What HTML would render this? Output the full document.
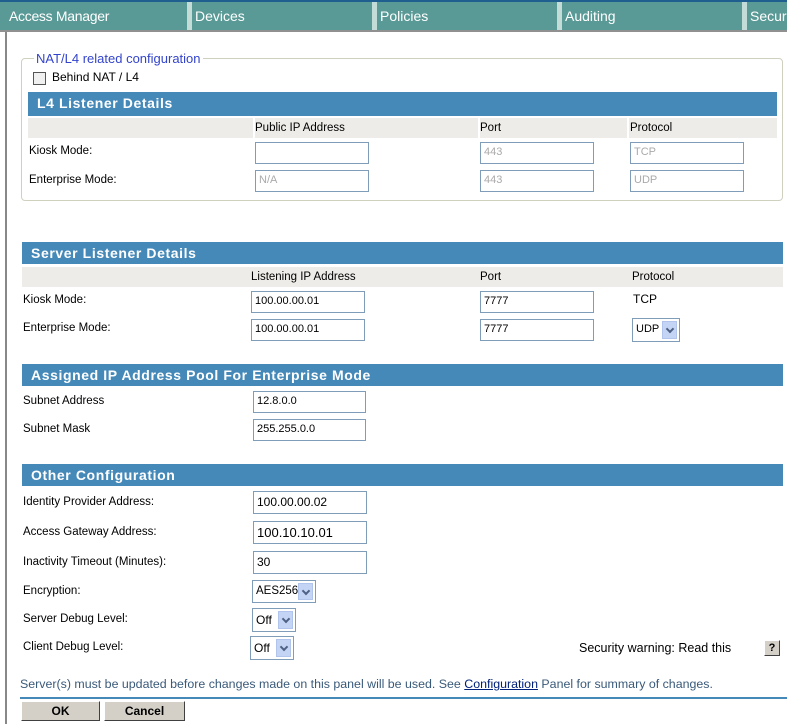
<!DOCTYPE html>
<html><head><meta charset="utf-8"><style>
*{margin:0;padding:0;box-sizing:border-box}
body{width:787px;height:724px;overflow:hidden;background:#fff;font-family:"Liberation Sans",sans-serif;font-size:12px;color:#000;position:relative}
.a{position:absolute;white-space:nowrap}
.l{font-size:11.5px}
.tab{position:absolute;top:2px;height:28px;background:#5a9a96;color:#fff;font-size:14px;padding:6px 0 0 9px}
.sep{position:absolute;top:2px;height:28px;width:5px;background:#c4dcd8}
.hd{position:absolute;background:#4589b9;color:#fff;font-weight:bold;font-size:14px;letter-spacing:0.6px;padding:3px 0 0 9px}
.gr{position:absolute;background:#eeece8;height:20px}
.in{position:absolute;border:1px solid #7f9db9;background:#fff;font-size:12px;padding:3px 0 0 3px;height:22px}
.dis{color:#aaa}
.sel{position:absolute;border:1px solid #7f9db9;background:#fff;height:24px;padding:4px 0 0 3px;font-size:12px;overflow:hidden}
.sel i{position:absolute;right:2px;top:2px;width:15px;bottom:2px;background:#c4d4f4;border:1px solid #b0c4ec}
.sel i:after{content:"";position:absolute;left:4px;top:4px;width:4px;height:4px;border-right:2px solid #4d6185;border-bottom:2px solid #4d6185;transform:rotate(45deg)}
.btn{position:absolute;background:#d4d0c8;border:1px solid #fff;border-right-color:#404040;border-bottom-color:#404040;font-weight:bold;text-align:center;height:20px;padding-top:2px}
</style></head><body>
<div class="a" style="left:0;top:0;width:787px;height:2px;background:#1f5f8f"></div>
<div class="tab" style="left:0;width:187px;letter-spacing:-0.3px">Access Manager</div>
<div class="sep" style="left:187px"></div>
<div class="tab" style="left:192px;width:180px;padding-left:3px">Devices</div>
<div class="sep" style="left:372px"></div>
<div class="tab" style="left:377px;width:180px;padding-left:3px">Policies</div>
<div class="sep" style="left:557px"></div>
<div class="tab" style="left:562px;width:180px;padding-left:3px">Auditing</div>
<div class="sep" style="left:742px"></div>
<div class="tab" style="left:747px;width:40px;overflow:hidden;padding-left:3px">Security</div>
<div class="a" style="left:0;top:30px;width:787px;height:2px;background:#909090"></div>
<div class="a" style="left:5px;top:32px;width:2px;height:692px;background:#888"></div>

<div class="a" style="left:21px;top:58px;width:762px;height:143px;border:1px solid #d0d0bf;border-radius:4px"></div>
<div class="a" style="left:34px;top:51px;background:#fff;padding:0 2px;color:#3344cc;font-size:13px">NAT/L4 related configuration</div>
<div class="a" style="left:33px;top:72px;width:13px;height:13px;border:1px solid #555;background:#f0f0f0"></div>
<div class="a" style="left:52px;top:70px">Behind NAT / L4</div>
<div class="hd" style="left:28px;top:92px;width:749px;height:24px">L4 Listener Details</div>
<div class="gr" style="left:28px;top:118px;width:749px"></div>
<div class="a" style="left:253px;top:118px;width:2px;height:20px;background:#fff"></div>
<div class="a" style="left:478px;top:118px;width:2px;height:20px;background:#fff"></div>
<div class="a" style="left:627px;top:118px;width:2px;height:20px;background:#fff"></div>
<div class="a l" style="left:255px;top:122px">Public IP Address</div>
<div class="a l" style="left:480px;top:122px">Port</div>
<div class="a l" style="left:630px;top:122px">Protocol</div>
<div class="a l" style="left:29px;top:145px">Kiosk Mode:</div>
<div class="a l" style="left:29px;top:174px">Enterprise Mode:</div>
<div class="in" style="left:255px;top:142px;width:114px"></div>
<div class="in dis" style="left:480px;top:142px;width:114px;font-size:11px">443</div>
<div class="in dis" style="left:630px;top:142px;width:114px;font-size:11px">TCP</div>
<div class="in dis" style="left:255px;top:170px;width:114px;font-size:11px">N/A</div>
<div class="in dis" style="left:480px;top:170px;width:114px;font-size:11px">443</div>
<div class="in dis" style="left:630px;top:170px;width:114px;font-size:11px">UDP</div>

<div class="hd" style="left:22px;top:242px;width:761px;height:22px">Server Listener Details</div>
<div class="gr" style="left:22px;top:267px;width:761px"></div>
<div class="a l" style="left:251px;top:271px">Listening IP Address</div>
<div class="a l" style="left:480px;top:271px">Port</div>
<div class="a l" style="left:632px;top:271px">Protocol</div>
<div class="a l" style="left:23px;top:294px">Kiosk Mode:</div>
<div class="a l" style="left:23px;top:322px">Enterprise Mode:</div>
<div class="in" style="left:251px;top:291px;width:114px;font-size:11px">100.00.00.01</div>
<div class="in" style="left:480px;top:291px;width:114px;font-size:11px">7777</div>
<div class="a" style="left:633px;top:292px">TCP</div>
<div class="in" style="left:251px;top:319px;width:114px;font-size:11px">100.00.00.01</div>
<div class="in" style="left:480px;top:319px;width:114px;font-size:11px">7777</div>
<div class="sel" style="left:632px;top:318px;width:48px;font-size:11px">UDP<i></i></div>

<div class="hd" style="left:22px;top:364px;width:761px;height:22px">Assigned IP Address Pool For Enterprise Mode</div>
<div class="a l" style="left:23px;top:395px">Subnet Address</div>
<div class="a l" style="left:23px;top:423px">Subnet Mask</div>
<div class="in" style="left:253px;top:391px;width:113px;font-size:11px">12.8.0.0</div>
<div class="in" style="left:253px;top:419px;width:113px;font-size:11px">255.255.0.0</div>

<div class="hd" style="left:22px;top:464px;width:761px;height:22px">Other Configuration</div>
<div class="a l" style="left:23px;top:496px">Identity Provider Address:</div>
<div class="a l" style="left:23px;top:526px">Access Gateway Address:</div>
<div class="a l" style="left:23px;top:556px">Inactivity Timeout (Minutes):</div>
<div class="a l" style="left:23px;top:585px">Encryption:</div>
<div class="a l" style="left:23px;top:613px">Server Debug Level:</div>
<div class="a l" style="left:23px;top:641px">Client Debug Level:</div>
<div class="in" style="left:253px;top:491px;width:114px;height:23px;font-size:12px">100.00.00.02</div>
<div class="in" style="left:253px;top:521px;width:114px;height:23px;font-size:13px;padding-top:3px">100.10.10.01</div>
<div class="in" style="left:253px;top:551px;width:114px;height:23px;font-size:12px">30</div>
<div class="sel" style="left:252px;top:580px;width:64px;height:23px;font-size:11.5px">AES256<i></i></div>
<div class="sel" style="left:252px;top:608px;width:44px">Off<i></i></div>
<div class="sel" style="left:250px;top:636px;width:44px">Off<i></i></div>
<div class="a" style="left:579px;top:641px;font-size:12.5px">Security warning: Read this</div>
<div class="a" style="left:764px;top:640px;width:16px;height:16px;background:#d4d0c8;border:1px solid #fff;border-right-color:#404040;border-bottom-color:#404040;font-weight:bold;text-align:center;font-size:11px;line-height:14px">?</div>

<div class="a" style="left:20px;top:677px;color:#3a5a7a;font-size:12.4px">Server(s) must be updated before changes made on this panel will be used. See <span style="color:#00207a;text-decoration:underline">Configuration</span> Panel for summary of changes.</div>
<div class="a" style="left:20px;top:697px;width:767px;height:2px;background:#4589b9"></div>
<div class="btn" style="left:21px;top:701px;width:79px">OK</div>
<div class="btn" style="left:104px;top:701px;width:81px">Cancel</div>
</body></html>
